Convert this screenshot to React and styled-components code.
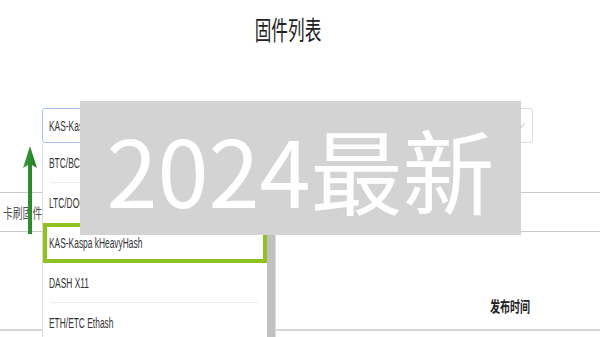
import React from "react";
import styled, { createGlobalStyle } from "styled-components";

const GlobalStyle = createGlobalStyle`
  html, body {
    margin: 0;
    padding: 0;
    background: #fff;
  }
  body {
    width: 600px;
    height: 337px;
    overflow: hidden;
    font-family: "Liberation Sans", "Noto Sans CJK SC", sans-serif;
  }
`;

const Page = styled.div`
  position: relative;
  width: 600px;
  height: 337px;
  overflow: hidden;
`;

// the source shot is squeezed sideways, so text gets narrowed
const Narrow = styled.span`
  display: inline-block;
  white-space: nowrap;
  transform: scaleX(${(p) => p.$sx || 0.6});
  transform-origin: ${(p) => p.$origin || "left"} center;
`;

const Header = styled.header`
  display: flex;
  justify-content: center;
  height: 26px;
  padding: 16px 24px 0 0;
`;

const Title = styled.h1`
  margin: 0;
  font-family: "Noto Sans CJK SC", sans-serif;
  font-size: 26px;
  font-weight: 400;
  line-height: 26px;
  color: #222;
`;

const SelectRow = styled.div`
  padding: 66px 67px 0 42px;
`;

const SelectWrap = styled.div`
  position: relative;
`;

const Select = styled.div`
  display: flex;
  height: 35px;
  box-sizing: border-box;
`;

const Field = styled.div`
  flex: 1;
  display: flex;
  align-items: center;
  padding-left: 6px;
  border: 1px solid #a9c0f0;
  border-radius: 3px 0 0 3px;
  font-size: 14px;
  color: #333;
`;

const Caret = styled.div`
  width: 24px;
  display: flex;
  align-items: center;
  justify-content: center;
  border: 1px solid #ddd;
  border-left: none;
  border-radius: 0 3px 3px 0;
`;

const Dropdown = styled.div`
  position: absolute;
  top: 35px;
  left: 0;
  z-index: 2;
  width: 234px;
  height: 220px;
  display: flex;
  box-sizing: border-box;
  background: #fff;
  border: 1px solid #ddd;
  border-top: none;
`;

const List = styled.div`
  flex: 1;
  display: flex;
  flex-direction: column;
`;

const Option = styled.div`
  position: relative;
  height: 40px;
  flex-shrink: 0;
  display: flex;
  align-items: center;
  box-sizing: border-box;
  padding-left: ${(p) => (p.$active ? "2px" : "6px")};
  border: ${(p) => (p.$active ? "4px solid #8dc21f" : "none")};
  font-size: 14px;
  color: #333;

  &::after {
    content: "";
    display: ${(p) => (p.$divider ? "block" : "none")};
    position: absolute;
    left: 7px;
    right: 9px;
    bottom: 0;
    height: 1px;
    background: #ececec;
  }
`;

const Scrollbar = styled.div`
  width: 8px;
  display: flex;
  flex-direction: column;
  background: #f1f1f1;
`;

const Thumb = styled.div`
  flex: 1;
  margin-top: 6px;
  background: #c1c1c1;
`;

const TabBar = styled.div`
  display: flex;
  align-items: center;
  height: 40px;
  margin-top: 49px;
  box-sizing: border-box;
  border-top: 1px solid #c8c8c8;
  border-bottom: 1px solid #c8c8c8;
`;

const Tab = styled.div`
  padding-left: 3px;
  font-family: "Noto Sans CJK SC", sans-serif;
  font-size: 14px;
  color: #555;
`;

const HeadRow = styled.div`
  display: grid;
  grid-template-columns: 450px 120px 1fr;
  align-items: center;
  height: 48px;
  margin-top: 49px;
  border-bottom: 2px solid #d8d8d8;
`;

const HeadCell = styled.div`
  text-align: center;
  font-family: "Noto Sans CJK SC", sans-serif;
  font-size: 15px;
  font-weight: 700;
  color: #222;
`;

const Arrow = styled.svg`
  position: absolute;
  left: 23px;
  top: 146px;
  z-index: 3;
`;

const Watermark = styled.div`
  position: absolute;
  left: 80px;
  top: 101px;
  z-index: 4;
  width: 441px;
  height: 134px;
  display: flex;
  align-items: center;
  justify-content: center;
  background: #d3d3d3;
  font-family: "Noto Sans CJK SC", sans-serif;
  font-size: 92px;
  line-height: 1;
  color: #fff;
`;

const options = [
  "BTC/BCH SHA256",
  "LTC/DOGE Scrypt",
  "KAS-Kaspa kHeavyHash",
  "DASH X11",
  "ETH/ETC Ethash",
];
const activeIndex = 2;

export default function App() {
  return (
    <Page>
      <GlobalStyle />
      <Header>
        <Title>
          <Narrow $sx={0.64} $origin="center">固件列表</Narrow>
        </Title>
      </Header>

      <SelectRow>
        <SelectWrap>
          <Select>
            <Field>
              <Narrow>KAS-Kaspa kHeavyHash</Narrow>
            </Field>
            <Caret>
              <svg width="9" height="6" viewBox="0 0 9 6">
                <polyline points="0.5,0.5 4.5,5 8.5,0.5" fill="none" stroke="#b8b8b8" strokeWidth="1" />
              </svg>
            </Caret>
          </Select>
          <Dropdown>
            <List>
              {options.map((name, i) => (
                <Option
                  key={name}
                  $active={i === activeIndex}
                  $divider={i !== activeIndex && i + 1 !== activeIndex}
                >
                  <Narrow>{name}</Narrow>
                </Option>
              ))}
            </List>
            <Scrollbar>
              <Thumb />
            </Scrollbar>
          </Dropdown>
        </SelectWrap>
      </SelectRow>

      <TabBar>
        <Tab>
          <Narrow $sx={0.7}>卡刷固件</Narrow>
        </Tab>
      </TabBar>

      <HeadRow>
        <HeadCell />
        <HeadCell>
          <Narrow $sx={0.67} $origin="center">发布时间</Narrow>
        </HeadCell>
        <HeadCell />
      </HeadRow>

      <Arrow width="14" height="88" viewBox="0 0 14 88">
        <defs>
          <linearGradient id="arrowFill" x1="0" x2="1" y1="0" y2="0">
            <stop offset="0" stopColor="#3c9e3c" />
            <stop offset="1" stopColor="#1f7a22" />
          </linearGradient>
        </defs>
        <path d="M7 0 L14 22 L9 19 L9 88 L5 88 L5 19 L0 22 Z" fill="url(#arrowFill)" />
      </Arrow>

      <Watermark>2024最新</Watermark>
    </Page>
  );
}
